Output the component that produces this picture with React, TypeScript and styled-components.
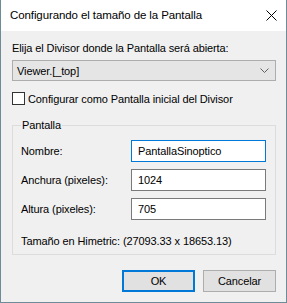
import React from "react";
import styled, { createGlobalStyle } from "styled-components";

const Global = createGlobalStyle`
  html, body { margin: 0; padding: 0; background: #ffffff; }
  * { box-sizing: border-box; }
  body {
    font-family: "Liberation Sans", Arial, sans-serif;
    font-size: 11px;
    letter-spacing: -0.1px;
    color: #000;
  }
`;

const Window = styled.div`
  width: 287px;
  height: 303px;
  border: 1px solid #6f8b98;
  border-top: none;
  background: #f0f0f0;
  display: flex;
  flex-direction: column;
`;

const TitleBar = styled.div`
  height: 31px;
  background: #ffffff;
  display: flex;
  align-items: center;
  justify-content: space-between;
  padding: 0 9px 1px 9px;
  font-size: 11.5px;
  letter-spacing: -0.1px;
`;

const CloseIcon = styled.svg`
  width: 11px;
  height: 11px;
`;

const Body = styled.div`
  flex: 1;
  display: flex;
  flex-direction: column;
  padding: 9px 10px 0 11px;
`;

const Label = styled.div`
  height: 16px;
  line-height: 16px;
  white-space: nowrap;
`;

const Combo = styled.div`
  margin-top: 4px;
  height: 21px;
  width: 264px;
  background: #e5e5e5;
  border: 1px solid #adadad;
  display: flex;
  align-items: center;
  justify-content: space-between;
  padding: 0 6px 0 4px;
`;

const CheckRow = styled.div`
  margin-top: 11px;
  display: flex;
  align-items: center;
  gap: 3px;
  height: 13px;
`;

const Box = styled.div`
  width: 13px;
  height: 13px;
  border: 1px solid #333333;
  background: #ffffff;
`;

const Group = styled.fieldset`
  margin: 12px 0 0 0;
  width: 264px;
  height: 138px;
  border: 1px solid #dcdcdc;
  padding: 0 9px 0 8px;
  display: flex;
  flex-direction: column;
  & > legend {
    padding: 0 1px;
    margin-left: 0;
    line-height: 16px;
  }
`;

const FieldRow = styled.div`
  display: flex;
  align-items: center;
  justify-content: space-between;
  margin-top: 7px;
`;

const Input = styled.div<{ $focused?: boolean }>`
  width: 135px;
  height: 22px;
  background: #ffffff;
  border: 1px solid ${(p) => (p.$focused ? "#0078d7" : "#7a7a7a")};
  padding: 0 6px;
  line-height: 20px;
`;

const Info = styled.div`
  margin-top: 13px;
  line-height: 16px;
`;

const Buttons = styled.div`
  display: flex;
  justify-content: flex-end;
  gap: 8px;
  margin-top: 15px;
`;

const Button = styled.div<{ $default?: boolean }>`
  width: 73px;
  height: 22px;
  background: #e1e1e1;
  border: ${(p) => (p.$default ? "2px solid #0078d7" : "1px solid #adadad")};
  display: flex;
  align-items: center;
  justify-content: center;
`;

export default function App() {
  return (
    <>
      <Global />
      <Window>
        <TitleBar>
          <span>Configurando el tamaño de la Pantalla</span>
          <CloseIcon viewBox="0 0 11 11">
            <path d="M0.5 0.5 L10.5 10.5 M10.5 0.5 L0.5 10.5" stroke="#000" strokeWidth="1" />
          </CloseIcon>
        </TitleBar>
        <Body>
          <Label>Elija el Divisor donde la Pantalla será abierta:</Label>
          <Combo>
            <span>Viewer.[_top]</span>
            <svg width="9" height="5" viewBox="0 0 9 5">
              <path d="M0.5 0.5 L4.5 4.5 L8.5 0.5" stroke="#606060" fill="none" strokeWidth="1" />
            </svg>
          </Combo>
          <CheckRow>
            <Box />
            <span>Configurar como Pantalla inicial del Divisor</span>
          </CheckRow>
          <Group>
            <legend>Pantalla</legend>
            <FieldRow>
              <span>Nombre:</span>
              <Input $focused>PantallaSinoptico</Input>
            </FieldRow>
            <FieldRow>
              <span>Anchura (pixeles):</span>
              <Input>1024</Input>
            </FieldRow>
            <FieldRow>
              <span>Altura (pixeles):</span>
              <Input>705</Input>
            </FieldRow>
            <Info>Tamaño en Himetric: (27093.33 x 18653.13)</Info>
          </Group>
          <Buttons>
            <Button $default>OK</Button>
            <Button>Cancelar</Button>
          </Buttons>
        </Body>
      </Window>
    </>
  );
}
